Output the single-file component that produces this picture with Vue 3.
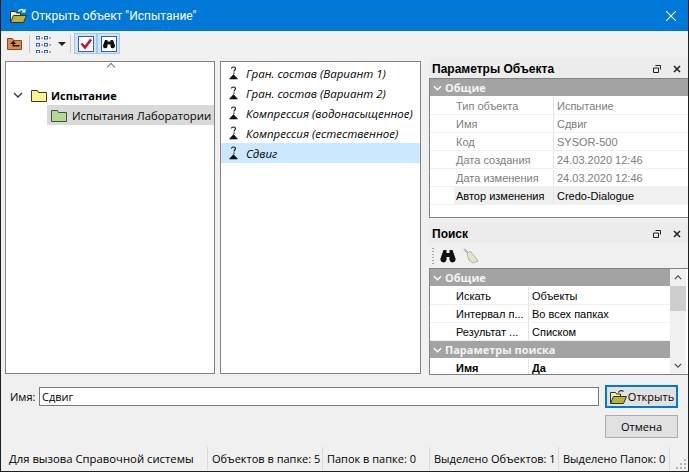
<script setup>
const testItems = [
  { name: 'Гран. состав (Вариант 1)' },
  { name: 'Гран. состав (Вариант 2)' },
  { name: 'Компрессия (водонасыщенное)' },
  { name: 'Компрессия (естественное)' },
  { name: 'Сдвиг', selected: true }
]

const objectProps = [
  { label: 'Тип объекта', value: 'Испытание' },
  { label: 'Имя', value: 'Сдвиг' },
  { label: 'Код', value: 'SYSOR-500' },
  { label: 'Дата создания', value: '24.03.2020 12:46' },
  { label: 'Дата изменения', value: '24.03.2020 12:46' }
]

const searchProps = [
  { label: 'Искать', value: 'Объекты' },
  { label: 'Интервал п...', value: 'Во всех папках' },
  { label: 'Результат ...', value: 'Списком' }
]

const statusCells = [
  { text: 'Для вызова Справочной системы', width: 207 },
  { text: 'Объектов в папке: 5', width: 115 },
  { text: 'Папок в папке: 0', width: 107 },
  { text: 'Выделено Объектов: 1', width: 129 },
  { text: 'Выделено Папок: 0', width: 111 }
]

const treeSquares = [
  [0, 1], [8, 1], [0, 8], [8, 8], [0, 15], [8, 15]
]
</script>

<template>
  <div class="window">
    <!-- заголовок -->
    <div class="titlebar">
      <svg class="title-icon" viewBox="0 0 18 16">
        <path d="M1.500 14V3.500h5l1 1.500h4v2" fill="#f6efb4" stroke="#33331c"/>
        <path d="M1.500 14.500 4.500 7.500h13l-3 7z" fill="#b9b23c" stroke="#33331c"/>
        <path d="M9.500 3.500c1-2 3.500-2.500 5-1" fill="none" stroke="#fff" stroke-width="1.500"/>
        <path d="M16.500 .5v4h-4z" fill="#fff"/>
      </svg>
      <span class="title-text">Открыть объект "Испытание"</span>
      <svg class="title-close" viewBox="0 0 10 10">
        <path d="M0 0l10 10M10 0 0 10" stroke="#fff" stroke-width="1.100"/>
      </svg>
    </div>

    <!-- панель инструментов -->
    <div class="toolbar">
      <svg class="tool-up" viewBox="0 0 15 13">
        <path d="M.5 12.500V1.500h5l1 2h8v9z" fill="#dd8a50" stroke="#8a4a1e"/>
        <path d="M6.500 3.500 3 7h2.500v2.500h7V8H7V7h2z" fill="#1c1c1c"/>
      </svg>
      <span class="tool-sep"></span>
      <svg class="tool-tree" viewBox="0 0 16 18">
        <template v-for="sq in treeSquares" :key="sq.join()">
          <rect :x="sq[0] + .5" :y="sq[1] + .5" width="3" height="2.500" fill="#fff" stroke="#2a62b8"/>
          <rect :x="sq[0] + 5" :y="sq[1] + 1.500" width="2" height="1" fill="#666"/>
        </template>
      </svg>
      <span class="tool-caret"></span>
      <span class="tool-sep tight"></span>
      <span class="tool-toggle">
        <svg viewBox="0 0 16 16">
          <rect x=".5" y=".5" width="15" height="15" fill="#fff" stroke="#34609c"/>
          <path d="M3.500 7.500 7 11.500 13 3.500" fill="none" stroke="#c4161c" stroke-width="2.600"/>
        </svg>
      </span>
      <span class="tool-toggle">
        <svg viewBox="0 0 16 16">
          <rect x=".5" y=".5" width="15" height="15" fill="#fff" stroke="#34609c"/>
          <path d="M4 4h2.500v1.500h3V4H12l2 5.500a2.300 2.300 0 0 1-4.500 1V8.500h-3v2A2.300 2.300 0 0 1 2 9.500z" fill="#111"/>
        </svg>
      </span>
    </div>

    <div class="main">
      <!-- дерево папок -->
      <div class="panel tree-panel">
        <span class="tree-scroll-up"></span>
        <div class="tree-row tree-root">
          <svg class="tree-chevron" viewBox="0 0 10 6"><path d="M1 1l4 4 4-4" fill="none" stroke="#444" stroke-width="1.500"/></svg>
          <svg class="folder" viewBox="0 0 16 13">
            <path d="M.5 12.500V1.500h6l1 2h8v9z" fill="#fdf58c" stroke="#3d3d25"/>
          </svg>
          <span>Испытание</span>
        </div>
        <div class="tree-row tree-child">
          <svg class="folder" viewBox="0 0 16 13">
            <path d="M.5 12.500V1.500h6l1 2h8v9z" fill="#b9d88e" stroke="#2f5a4a"/>
          </svg>
          <span>Испытания Лаборатории</span>
        </div>
      </div>

      <!-- список объектов -->
      <div class="panel list-panel">
        <div v-for="item in testItems" :key="item.name" class="list-row" :class="{ selected: item.selected }">
          <svg class="item-icon" viewBox="0 0 11 14">
            <path d="M3.500 2.500c0-2 4-2 4 0 0 1.500-1.500 1.500-1.500 3" fill="none" stroke="#111" stroke-width="1.100"/>
            <rect x="5.500" y="6.500" width="1" height="1.500" fill="#111"/>
            <path d="M5.500 8.500 9.500 13h-8z" fill="#111" stroke="#111" stroke-width=".6"/>
          </svg>
          <span>{{ item.name }}</span>
        </div>
      </div>

      <!-- правая колонка -->
      <div class="side">
        <div class="dock-head">
          <span>Параметры Объекта</span>
          <svg class="dock-icon" viewBox="0 0 8 8"><path d="M2.500.5h5v4M.5 3h5v4.500h-5z" fill="none" stroke="#222"/></svg>
          <svg class="dock-icon close" viewBox="0 0 8 8"><path d="M1 1l6 6M7 1 1 7" stroke="#222" stroke-width="1.600"/></svg>
        </div>
        <div class="grid-box params-box">
          <div class="group-row">
            <svg viewBox="0 0 10 6"><path d="M1 1l4 4 4-4" fill="none" stroke="#fff" stroke-width="1.500"/></svg>
            Общие
          </div>
          <div v-for="row in objectProps" :key="row.label" class="prop-row params-row muted">
            <span class="prop-label">{{ row.label }}</span>
            <span class="prop-value">{{ row.value }}</span>
          </div>
          <div class="prop-row params-row active">
            <span class="prop-label">Автор изменения</span>
            <span class="prop-value">Credo-Dialogue</span>
          </div>
        </div>

        <div class="dock-head search-head">
          <span>Поиск</span>
          <svg class="dock-icon" viewBox="0 0 8 8"><path d="M2.500.5h5v4M.5 3h5v4.500h-5z" fill="none" stroke="#222"/></svg>
          <svg class="dock-icon close" viewBox="0 0 8 8"><path d="M1 1l6 6M7 1 1 7" stroke="#222" stroke-width="1.600"/></svg>
        </div>
        <div class="search-tools">
          <span class="grip-v"></span>
          <svg class="binoculars" viewBox="0 0 16 14">
            <path d="M3.500 1h3v3h3V1h3l3 8.500a3 3 0 0 1-6 1.500V8h-3v3a3 3 0 0 1-6-1.500z" fill="#111"/>
          </svg>
          <svg class="broom" viewBox="0 0 16 16">
            <path d="M1 1l5 5" stroke="#b8b8b8" stroke-width="2"/>
            <path d="M4 6l3-3 6 7 2 3-5 2-4-3z" fill="#e6e3c6" stroke="#b4b4a4"/>
          </svg>
        </div>
        <div class="grid-box search-box">
          <div class="search-rows">
            <div class="group-row">
              <svg viewBox="0 0 10 6"><path d="M1 1l4 4 4-4" fill="none" stroke="#fff" stroke-width="1.500"/></svg>
              Общие
            </div>
            <div v-for="row in searchProps" :key="row.label" class="prop-row search-row">
              <span class="prop-label">{{ row.label }}</span>
              <span class="prop-value">{{ row.value }}</span>
            </div>
            <div class="group-row">
              <svg viewBox="0 0 10 6"><path d="M1 1l4 4 4-4" fill="none" stroke="#fff" stroke-width="1.500"/></svg>
              Параметры поиска
            </div>
            <div class="prop-row search-row strong">
              <span class="prop-label">Имя</span>
              <span class="prop-value">Да</span>
            </div>
          </div>
          <div class="scrollbar">
            <svg viewBox="0 0 10 6"><path d="M1 5l4-4 4 4" fill="none" stroke="#444" stroke-width="1.400"/></svg>
            <span class="thumb"></span>
            <svg viewBox="0 0 10 6"><path d="M1 1l4 4 4-4" fill="none" stroke="#444" stroke-width="1.400"/></svg>
          </div>
        </div>
      </div>
    </div>

    <!-- имя и кнопки -->
    <div class="name-row">
      <label class="name-label">Имя:</label>
      <div class="name-input">Сдвиг</div>
      <button class="btn btn-open">
        <svg viewBox="0 0 18 16">
          <path d="M1.500 14V3.500h5l1 1.500h4v2" fill="#f6efb4" stroke="#33331c"/>
          <path d="M1.500 14.500 4.500 7.500h13l-3 7z" fill="#b9b23c" stroke="#33331c"/>
          <path d="M9.500 3.500c1-2 3.500-2.500 5-1" fill="none" stroke="#333" stroke-width="1.200"/>
        </svg>
        Открыть
      </button>
    </div>
    <div class="cancel-row">
      <button class="btn">Отмена</button>
    </div>

    <!-- строка состояния -->
    <div class="statusbar">
      <span v-for="cell in statusCells" :key="cell.text" class="status-cell" :style="{ width: cell.width + 'px' }">{{ cell.text }}</span>
      <svg class="size-grip" viewBox="0 0 12 12">
        <g fill="#b5b5b5">
          <rect x="9" y="1" width="2" height="2"/><rect x="5" y="5" width="2" height="2"/><rect x="9" y="5" width="2" height="2"/>
          <rect x="1" y="9" width="2" height="2"/><rect x="5" y="9" width="2" height="2"/><rect x="9" y="9" width="2" height="2"/>
        </g>
      </svg>
    </div>
  </div>
</template>

<style>
html, body {
  margin: 0;
  background: #f0f0f0;
}
</style>

<style scoped>
.window {
  width: 689px;
  height: 472px;
  box-sizing: border-box;
  display: flex;
  flex-direction: column;
  background: #f0f0f0;
  border-left: 1px solid #1f1f1f;
  border-right: 1px solid #1f1f1f;
  border-bottom: 1px solid #1f1f1f;
  font-family: "Open Sans", "Liberation Sans", sans-serif;
  font-size: 11px;
  color: #000;
  overflow: hidden;
}

.titlebar {
  height: 31px;
  flex: none;
  margin: 0 -1px;
  display: flex;
  align-items: center;
  background: #0078d7;
  color: #fff;
  font-family: Roboto, "Liberation Sans", sans-serif;
  font-size: 12px;
}
.title-icon {
  width: 18px;
  height: 16px;
  margin-left: 9px;
}
.title-text {
  margin-left: 4px;
}
.title-close {
  width: 10px;
  height: 10px;
  margin-left: auto;
  margin-right: 13px;
}

.toolbar {
  height: 25px;
  flex: none;
  display: flex;
  align-items: center;
  padding-left: 6px;
  background: #f0f0f0;
}
.tool-up {
  width: 15px;
  height: 13px;
}
.tool-sep {
  width: 1px;
  height: 18px;
  margin: 0 6px 0 7px;
  background: #c8c8c8;
}
.tool-sep.tight {
  margin: 0 3px 0 4px;
}
.tool-tree {
  width: 16px;
  height: 18px;
}
.tool-caret {
  width: 0;
  height: 0;
  margin-left: 6px;
  border-left: 4px solid transparent;
  border-right: 4px solid transparent;
  border-top: 4px solid #222;
}
.tool-toggle {
  width: 23px;
  height: 21px;
  box-sizing: border-box;
  display: flex;
  align-items: center;
  justify-content: center;
  background: #cde4f7;
  border: 1px solid #9fcaee;
}
.tool-toggle svg {
  width: 16px;
  height: 16px;
}

.main {
  flex: none;
  height: 319px;
  display: flex;
  padding: 5px 0 0 4px;
  box-sizing: border-box;
}
.panel {
  box-sizing: border-box;
  height: 313px;
  background: #fff;
  border: 1px solid #828282;
}
.tree-panel {
  width: 210px;
  position: relative;
  padding-top: 23px;
  font-size: 11.300px;
}
.tree-scroll-up {
  position: absolute;
  left: 102px;
  top: 2px;
  width: 5px;
  height: 5px;
  border-left: 1px solid #777;
  border-top: 1px solid #777;
  transform: rotate(45deg);
}
.tree-row {
  display: flex;
  align-items: center;
  height: 20px;
}
.tree-root {
  font-weight: 700;
  font-size: 11px;
  padding-left: 7px;
}
.tree-chevron {
  width: 10px;
  height: 6px;
}
.tree-root .folder {
  margin-left: 8px;
}
.tree-root span {
  margin-left: 4px;
}
.folder {
  width: 16px;
  height: 13px;
  flex: none;
}
.tree-child {
  margin-left: 41px;
  padding-left: 4px;
  background: #d9d9d9;
  white-space: nowrap;
}
.tree-child span {
  margin-left: 5px;
}

.list-panel {
  width: 201px;
  margin-left: 5px;
  padding-top: 1px;
  font-style: italic;
  font-size: 11.500px;
}
.list-row {
  height: 20px;
  display: flex;
  align-items: center;
  padding-left: 7px;
  white-space: nowrap;
}
.list-row.selected {
  background: #cce8ff;
}
.item-icon {
  width: 11px;
  height: 14px;
  flex: none;
  margin-right: 7px;
}

.side {
  width: 260px;
  margin-left: 8px;
  display: flex;
  flex-direction: column;
  margin-right: -2px;
}
.dock-head {
  height: 18px;
  flex: none;
  margin-top: -3px;
  padding: 2px 8px 0 3px;
  display: flex;
  align-items: center;
  font-weight: 700;
  font-family: "Liberation Sans", sans-serif;
  font-size: 12px;
  background: #ececec;
}
.dock-icon {
  width: 8px;
  height: 8px;
  margin-left: auto;
}
.dock-icon.close {
  margin-left: 12px;
}
.grid-box {
  box-sizing: border-box;
  background: #fff;
  border: 1px solid #828282;
}
.params-box {
  height: 142px;
}
.group-row {
  height: 17px;
  display: flex;
  align-items: center;
  gap: 3px;
  padding-left: 3px;
  background: #a3a3a3;
  color: #f4f4f4;
  font-weight: 700;
  margin-bottom: 1px;
  white-space: nowrap;
}
.group-row svg {
  width: 9px;
  height: 6px;
}
.prop-row {
  height: 18px;
  display: flex;
  align-items: center;
  box-sizing: border-box;
  border-bottom: 1px solid #f0f0f0;
  font-family: "Liberation Sans", sans-serif;
  white-space: nowrap;
}
.prop-label {
  box-sizing: border-box;
  height: 100%;
  display: flex;
  align-items: center;
  border-right: 1px solid #e4e4e4;
  overflow: hidden;
}
.prop-value {
  padding-left: 3px;
}
.params-row .prop-label {
  width: 124px;
  padding-left: 26px;
}
.params-row.muted {
  color: #7d7d7d;
}
.params-row.active {
  background: linear-gradient(to right, #fff 24px, #f0f0f0 24px);
}

.search-head {
  margin-top: 4px;
  height: 19px;
}
.search-tools {
  height: 25px;
  flex: none;
  display: flex;
  align-items: center;
  padding-left: 3px;
}
.grip-v {
  width: 2px;
  height: 16px;
  background-image: linear-gradient(#a8a8a8 50%, transparent 50%);
  background-size: 2px 3px;
}
.binoculars {
  width: 16px;
  height: 14px;
  margin-left: 6px;
}
.broom {
  width: 16px;
  height: 16px;
  margin-left: 7px;
}
.search-box {
  height: 108px;
  display: flex;
  overflow: hidden;
}
.search-rows {
  flex: 1;
  min-width: 0;
}
.search-row .prop-label {
  width: 99px;
  padding-left: 26px;
}
.search-row.strong {
  font-weight: 700;
  border-bottom: none;
}
.scrollbar {
  width: 16px;
  flex: none;
  display: flex;
  flex-direction: column;
  align-items: center;
  background: #f0f0f0;
  margin-right: 2px;
}
.scrollbar svg {
  width: 8px;
  height: 5px;
  margin: 6px 0;
}
.scrollbar svg:last-child {
  margin-top: auto;
}
.thumb {
  width: 16px;
  height: 25px;
  background: #cdcdcd;
}

.name-row {
  flex: none;
  height: 23px;
  margin-top: 10px;
  display: flex;
  align-items: center;
  padding-left: 9px;
}
.name-label {
  width: 29px;
}
.name-input {
  box-sizing: border-box;
  width: 560px;
  height: 19px;
  padding-left: 2px;
  display: flex;
  align-items: center;
  background: #fff;
  border: 1px solid #7a7a7a;
}
.btn {
  box-sizing: border-box;
  width: 73px;
  height: 23px;
  padding: 0;
  display: flex;
  align-items: center;
  justify-content: center;
  gap: 1px;
  font: inherit;
  color: #000;
  background: #e1e1e1;
  border: 1px solid #adadad;
}
.btn svg {
  width: 18px;
  height: 16px;
}
.btn-open {
  margin-left: 6px;
  border: 2px solid #0078d7;
}
.cancel-row {
  flex: none;
  margin-top: 7px;
  padding-left: 604px;
}
.statusbar {
  flex: none;
  margin-top: auto;
  height: 25px;
  display: flex;
  align-items: center;
  position: relative;
}
.status-cell {
  box-sizing: border-box;
  height: 23px;
  display: flex;
  align-items: center;
  padding-left: 8px;
  border-right: 1px solid #d9d9d9;
  white-space: nowrap;
  overflow: hidden;
}
.status-cell:first-child {
  font-size: 11.300px;
}
.status-cell:nth-child(n+2) {
  padding-left: 4px;
}
.size-grip {
  position: absolute;
  right: 1px;
  bottom: 1px;
  width: 12px;
  height: 12px;
}
</style>
